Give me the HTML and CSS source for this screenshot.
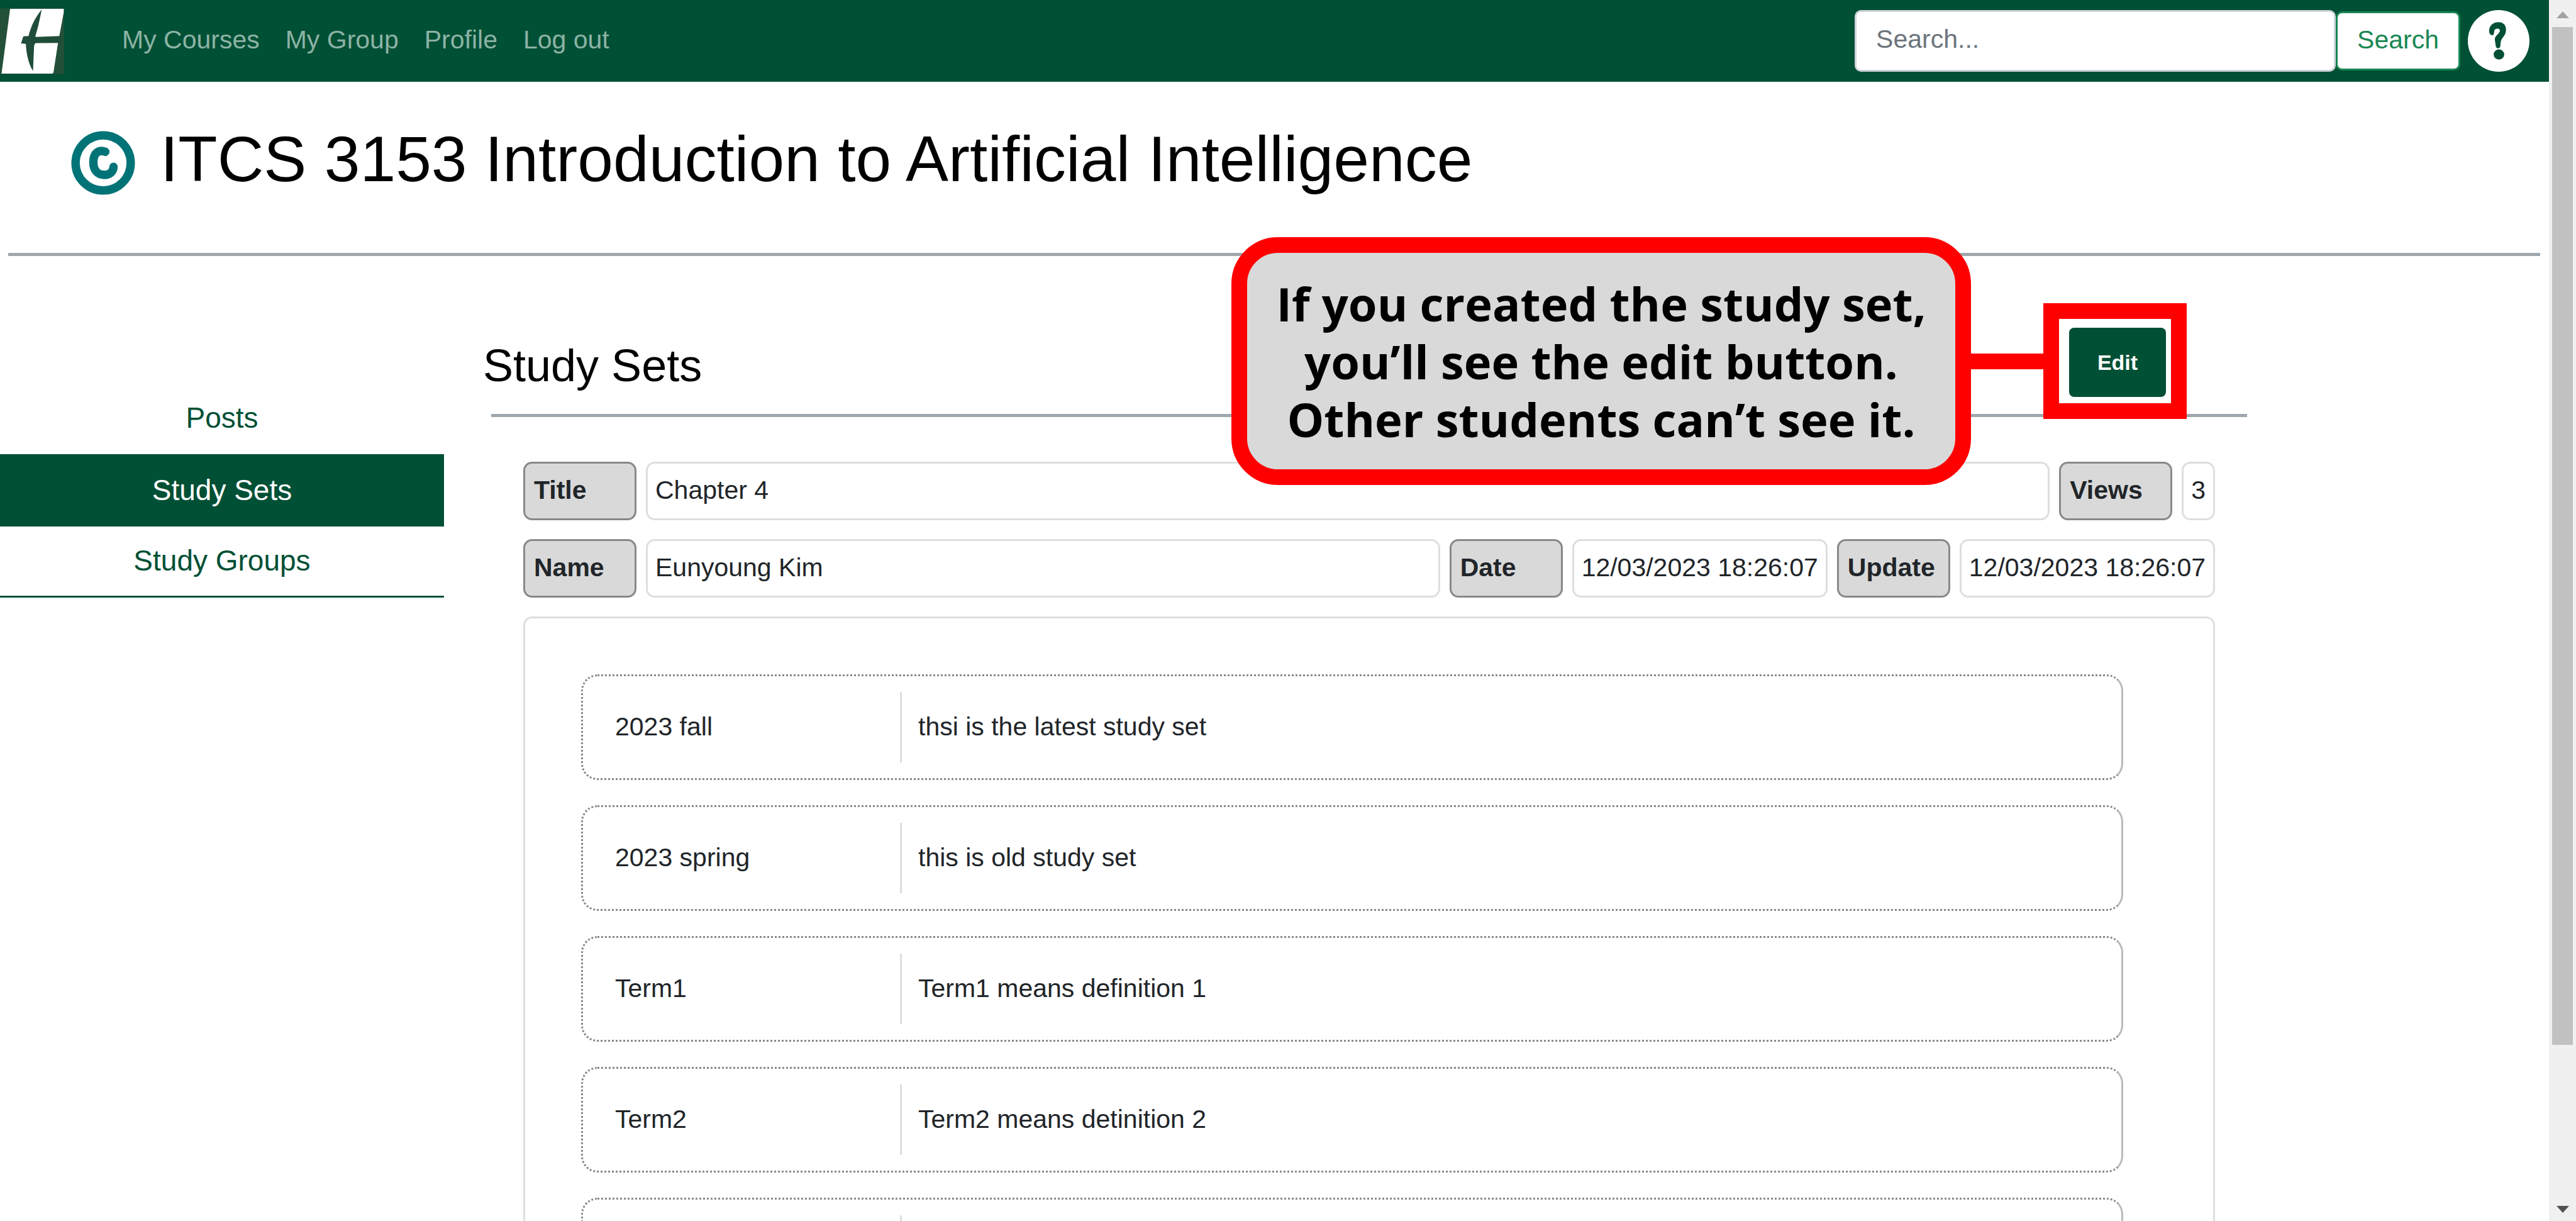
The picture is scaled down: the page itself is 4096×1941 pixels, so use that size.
FILE: index.html
```html
<!DOCTYPE html>
<html lang="en">
<head>
<meta charset="utf-8">
<title>ITCS 3153 Introduction to Artificial Intelligence</title>
<link rel="stylesheet" href="styles.css">
</head>
<body>
<div class="page">
  <header class="navbar">
    <a class="logo" href="#" aria-label="Home">
      <svg viewBox="0 40 330 338" aria-hidden="true">
        <rect x="0" y="40" width="330" height="338" fill="#235039"/>
        <path d="M52 42H328V60L305 183L298 220L275 370L270 376H8Z" fill="#fff"/>
        <path d="M215 45C180 90 160 130 147 182L120 184L108 220L133 223C135 275 148 330 170 362L175 240Q176 220 186 219L304 218L310 182L184 187Q180 184 184 176C200 125 205 90 215 45Z" fill="#1f4d39"/>
      </svg>
    </a>
    <nav class="links">
      <a href="#">My Courses</a>
      <a href="#">My Group</a>
      <a href="#">Profile</a>
      <a href="#">Log out</a>
    </nav>
    <form class="search">
      <input class="search-box" type="text" placeholder="Search..." aria-label="Search">
      <button class="search-button" type="button">Search</button>
    </form>
    <button class="help" type="button" aria-label="Help">
      <svg viewBox="77 47 315 315" aria-hidden="true" fill="#005035">
        <path d="M186 158C184 128 205 108 236 109C262 110 274 128 272 152C270 180 246 190 245 212L243 232Q242 242 232 242Q221 242 220 232L215 198C213 178 238 170 241 154C241 146 236 141 228 142C212 144 213 150 211 162C210 174 205 178 198 175C190 172 187 166 186 158Z"/>
        <ellipse cx="236" cy="274" rx="27" ry="26"/>
      </svg>
    </button>
  </header>

  <div class="course">
    <svg class="course-icon" viewBox="64 72 326 328" aria-hidden="true" fill="none" stroke="#007377" stroke-linecap="round">
      <circle cx="227" cy="236" r="141" stroke-width="43"/>
      <path d="M238 179C205 166 177 185 177 232C177 275 200 297 232 297C262 297 279 280 280 256" stroke-width="43"/>
    </svg>
    <h1>ITCS 3153 Introduction to Artificial Intelligence</h1>
  </div>

  <div class="columns">
    <nav class="sidebar">
      <a href="#">Posts</a>
      <a class="active" href="#">Study Sets</a>
      <a href="#">Study Groups</a>
    </nav>
    <main class="content">
      <div class="heading">
        <h2>Study Sets</h2>
        <div class="edit-frame">
          <button class="edit" type="button">Edit</button>
          <div class="callout">If you created the study set,<br>you’ll see the edit button.<br>Other students can’t see it.</div>
        </div>
      </div>
      <div class="details">
        <div class="row">
          <span class="label">Title</span><span class="value grow">Chapter 4</span>
          <span class="label">Views</span><span class="value">3</span>
        </div>
        <div class="row">
          <span class="label">Name</span><span class="value grow">Eunyoung Kim</span>
          <span class="label">Date</span><span class="value">12/03/2023 18:26:07</span>
          <span class="label">Update</span><span class="value">12/03/2023 18:26:07</span>
        </div>
        <div class="panel">
          <div class="card"><span class="term">2023 fall</span><span class="definition">thsi is the latest study set</span></div>
          <div class="card"><span class="term">2023 spring</span><span class="definition">this is old study set</span></div>
          <div class="card"><span class="term">Term1</span><span class="definition">Term1 means definition 1</span></div>
          <div class="card"><span class="term">Term2</span><span class="definition">Term2 means detinition 2</span></div>
          <div class="card"><span class="term"></span><span class="definition"></span></div>
        </div>
      </div>
    </main>
  </div>
</div>
<div class="scrollbar" aria-hidden="true">
  <svg class="arrow" viewBox="0 0 20 11"><path d="M10 0L20 11H0Z" fill="#a3a3a3"/></svg>
  <div class="track"><div class="thumb"></div></div>
  <svg class="arrow" viewBox="0 0 20 11"><path d="M0 0H20L10 11Z" fill="#505050"/></svg>
</div>
</body>
</html>
```
FILE: styles.css
```css
* {
  box-sizing: border-box;
}

body {
  margin: 0;
  height: 100vh;
  overflow: hidden;
  display: flex;
  background: #fff;
  color: #212529;
  font-family: "Liberation Sans", Arial, sans-serif;
  font-size: 41px;
  line-height: 62px;
}

a {
  text-decoration: none;
}

button,
input {
  font: inherit;
  margin: 0;
}

.page {
  flex: 1;
  min-width: 0;
  height: 100vh;
  overflow: hidden;
}

/* Top bar */
.navbar {
  display: flex;
  align-items: center;
  height: 130px;
  padding-right: 31px;
  background: #005035;
}

.logo svg {
  display: block;
  width: 102px;
  height: 105px;
}

.links {
  display: flex;
  gap: 41px;
  margin-left: 92px;
  padding-bottom: 5px;
  flex: 1;
}

.links a {
  color: #8cb3a5;
}

.search {
  display: flex;
  align-items: center;
}

.search-box {
  width: 765px;
  height: 98px;
  padding: 0 31px 5px;
  border: 3px solid #ced4da;
  border-radius: 10px;
  background: #fff;
}

.search-box::placeholder {
  color: #6c757d;
  opacity: 1;
}

.search-button {
  height: 94px;
  padding: 0 31px 5px;
  border: 3px solid #198754;
  border-radius: 10px;
  background: #fff;
  color: #198754;
}

.help {
  width: 98px;
  height: 98px;
  margin-left: 12px;
  padding: 0;
  border: 0;
  border-radius: 50%;
  background: #fff;
}

.help svg {
  display: block;
  width: 98px;
  height: 98px;
}

/* Course title */
.course {
  display: flex;
  align-items: center;
  gap: 40px;
  height: 277px;
  margin: 0 14px 0 13px;
  padding: 0 0 15px 100px;
  border-bottom: 5px solid #9fa8ae;
}

.course-icon {
  width: 102px;
  height: 102px;
}

h1 {
  margin: 0;
  padding-bottom: 12px;
  color: #000;
  font-size: 102px;
  font-weight: 400;
  line-height: 124px;
}

/* Two columns */
.columns {
  display: flex;
}

.sidebar {
  width: 706px;
  margin-top: 200px;
  align-self: flex-start;
  border-bottom: 3px solid #005035;
  font-size: 46px;
}

.sidebar a {
  display: block;
  height: 115px;
  line-height: 114px;
  color: #005035;
  text-align: center;
}

.sidebar .active {
  background: #005035;
  color: #fff;
}

.sidebar a:last-child {
  height: 110px;
  line-height: 108px;
}

.content {
  flex: 1;
  margin: 75px 480px 0 66px;
}

.heading {
  display: flex;
  justify-content: space-between;
  height: 181px;
  margin-left: 9px;
  border-bottom: 5px solid #9fa8ae;
}

h2 {
  margin: 56px 0 0 -13px;
  color: #000;
  font-size: 72px;
  font-weight: 400;
  line-height: 86px;
}

.edit-frame {
  position: relative;
  width: 228px;
  height: 184px;
  margin-right: 96px;
  padding: 14px 8px 10px 16px;
  border: 25px solid #f00;
  background: #fff;
}

.edit {
  display: block;
  width: 154px;
  height: 110px;
  padding: 0;
  border: 0;
  border-radius: 8px;
  background: #005035;
  color: #fff;
  font-size: 34px;
  font-weight: 700;
}

/* Annotation and the line that joins it to the button */
.callout {
  position: absolute;
  top: -130px;
  right: 318px;
  width: 1176px;
  height: 394px;
  padding: 35px 0;
  border: 25px solid #f00;
  border-radius: 74px;
  background: #d9d9d9;
  color: #000;
  font: 700 74px/92px "Open Sans", sans-serif;
  text-align: center;
  white-space: nowrap;
}

.callout::after {
  content: "";
  position: absolute;
  left: 100%;
  top: 160px;
  width: 140px;
  height: 25px;
  background: #f00;
}

/* Study set details */
.details {
  display: flex;
  flex-direction: column;
  gap: 30px;
  margin: 71px 51px 0 60px;
}

.row {
  display: flex;
  gap: 15px;
}

.label,
.value {
  height: 93px;
  padding: 11px 12px;
  border: 3px solid #dedede;
  border-radius: 14px;
  white-space: nowrap;
}

.label {
  width: 180px;
  padding-left: 14px;
  border-color: #888;
  background: #d9d9d9;
  font-weight: 700;
}

.grow {
  flex: 1;
}

.panel {
  display: flex;
  flex-direction: column;
  gap: 40px;
  padding: 89px 143px 90px 89px;
  border: 3px solid #dedede;
  border-radius: 14px;
}

.card {
  display: flex;
  height: 168px;
  padding: 25px 51px;
  border: 3px dotted #888;
  border-right: 3px solid #bbb;
  border-radius: 26px;
  line-height: 111px;
}

.term {
  width: 456px;
  border-right: 3px solid #dedede;
}

.definition {
  padding-left: 26px;
}

/* Scroll bar */
.scrollbar {
  display: flex;
  flex-direction: column;
  align-items: center;
  width: 43px;
  padding: 18px 0 13px;
  background: #f0f0f0;
}

.arrow {
  display: block;
  width: 20px;
  height: 11px;
}

.track {
  flex: 1;
  padding: 14px 0;
}

.thumb {
  width: 33px;
  height: 87%;
  background: #c1c1c1;
}
```
